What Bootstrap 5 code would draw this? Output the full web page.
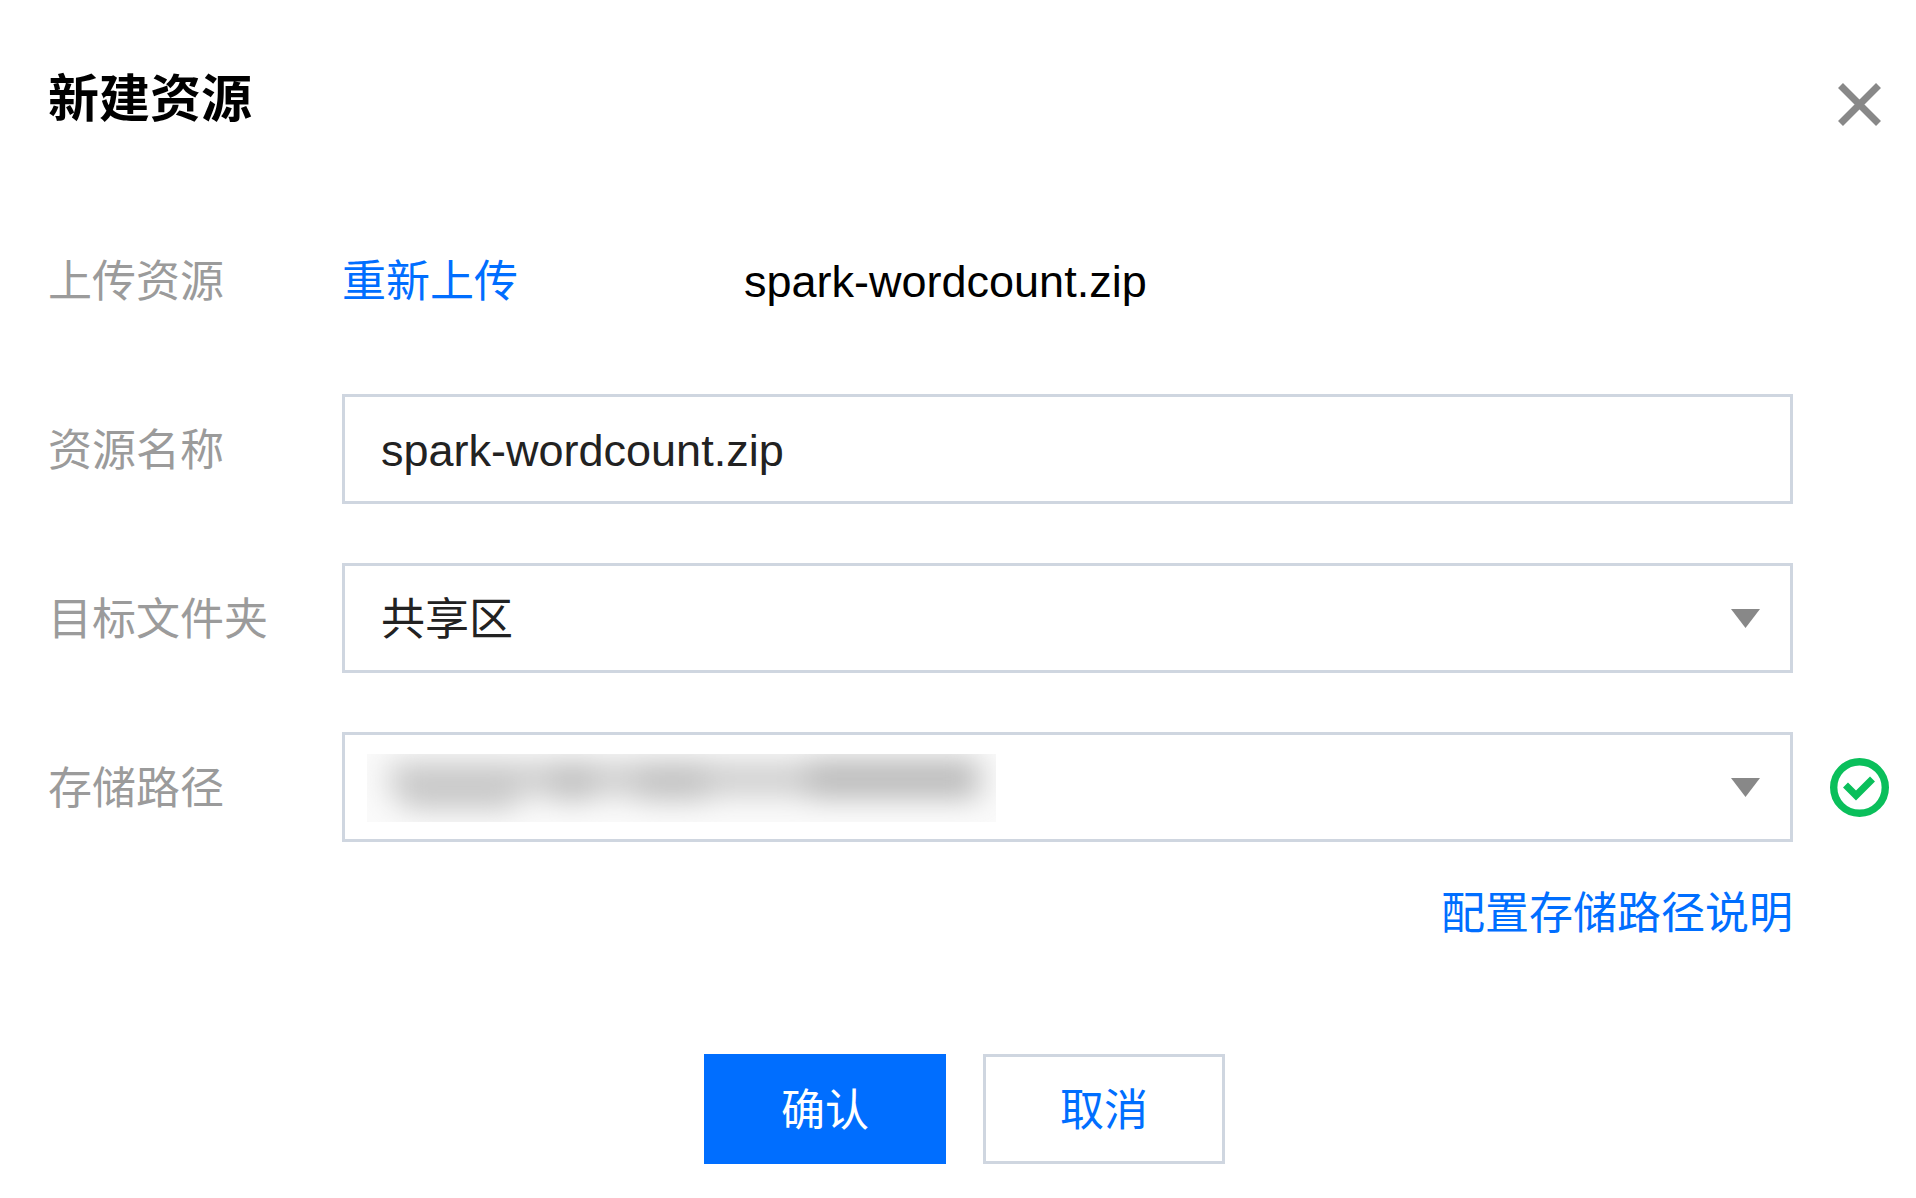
<!DOCTYPE html>
<html lang="zh-CN">
<head>
<meta charset="utf-8">
<meta name="viewport" content="width=device-width, initial-scale=1">
<title>新建资源</title>
<link href="https://cdn.jsdelivr.net/npm/bootstrap@5.3.0/dist/css/bootstrap.min.css" rel="stylesheet">
<style>
  body { font-family: "Liberation Sans", "Noto Sans CJK SC", sans-serif; font-size: 44px; line-height: 64px; color: #000; background: #fff; }
  .dialog-head { padding: 68px 35px 0 48px; height: 225px; }
  .dialog-title { font-size: 51px; line-height: 64px; font-weight: 700; }
  .close-btn { width: 43px; height: 43px; margin-top: 15px; }
  .close-btn svg, .status-icon svg { display: block; width: 100%; height: 100%; }
  .dialog-form { padding: 0 27px 0 48px; gap: 59px; }
  .field-row { min-height: 110px; }
  .field-label { width: 294px; color: #9b9b9b; }
  .field-label, .upload-link, .file-name { padding-top: 4px; }
  .blue-link { color: #006eff; text-decoration: none; }
  .upload-link { width: 402px; }
  .latin { font-size: 45px; }
  .field-box.form-control, .field-box.form-select {
    height: 110px; border: 3px solid #cfd6e0; border-radius: 0; padding: 4px 36px 0;
    color: #222; background-color: #fff; font-size: 44px; line-height: 64px;
  }
  .field-box.form-control.latin { font-size: 45px; }
  .field-box.form-select {
    background-image: url("data:image/svg+xml,%3Csvg xmlns='http://www.w3.org/2000/svg' viewBox='0 0 29 19'%3E%3Cpath d='M0 0H29L14.500 19Z' fill='%23888'/%3E%3C/svg%3E");
    background-size: 29px 19px; background-position: right 30px center;
  }
  .status-slot { width: 96px; }
  .status-icon { width: 59px; height: 59px; }
  .masked-value {
    left: 25px; top: 22px; width: 629px; height: 68px; overflow: hidden; pointer-events: none; background: #fafafa;
  }
  .masked-value svg { display: block; width: 100%; height: 100%; }
  .help-line { padding-right: 96px; margin-top: -19px; }
  .dialog-foot { padding: 108px 35px 32px 48px; gap: 37px; }
  .action-btn.btn { width: 242px; height: 110px; border-radius: 0; padding: 4px 0 0; font-size: 44px; line-height: 64px; border: 3px solid #cfd6e0; color: #006eff; background: #fff; }
  .action-btn.btn-primary { background: #006eff; border-color: #006eff; color: #fff; }
</style>
</head>
<body>
<main>
  <header class="dialog-head d-flex justify-content-between align-items-start">
    <h1 class="dialog-title m-0">新建资源</h1>
    <button type="button" class="close-btn btn p-0 border-0" aria-label="关闭">
      <svg viewBox="0 0 43 43"><path d="M2.500 2.500L40.500 40.500M40.500 2.500L2.500 40.500" stroke="#888" stroke-width="7" fill="none"/></svg>
    </button>
  </header>

  <form class="dialog-form d-flex flex-column">
    <div class="field-row d-flex align-items-center">
      <span class="field-label flex-shrink-0">上传资源</span>
      <a href="#" class="blue-link upload-link">重新上传</a>
      <span class="file-name latin">spark-wordcount.zip</span>
    </div>
    <div class="field-row d-flex align-items-center">
      <label class="field-label flex-shrink-0" for="resName">资源名称</label>
      <div class="flex-grow-1"><input id="resName" type="text" class="field-box latin form-control" value="spark-wordcount.zip"></div>
      <div class="status-slot flex-shrink-0"></div>
    </div>
    <div class="field-row d-flex align-items-center">
      <label class="field-label flex-shrink-0" for="folder">目标文件夹</label>
      <div class="flex-grow-1"><select id="folder" class="field-box form-select"><option>共享区</option></select></div>
      <div class="status-slot flex-shrink-0"></div>
    </div>
    <div class="field-row d-flex align-items-center">
      <label class="field-label flex-shrink-0" for="path">存储路径</label>
      <div class="flex-grow-1 position-relative">
        <select id="path" class="field-box form-select"><option></option></select>
        <!-- masked bucket path -->
        <div class="masked-value position-absolute">
          <svg viewBox="0 0 629 68" preserveAspectRatio="none" aria-hidden="true">
            <defs><filter id="soft" x="-20%" y="-100%" width="140%" height="300%"><feGaussianBlur stdDeviation="15 13"/></filter></defs>
            <g filter="url(#soft)">
              <rect x="22" y="6" width="590" height="38" fill="#d4d4d4"/>
              <rect x="35" y="14" width="115" height="42" fill="#cacaca"/>
              <rect x="185" y="6" width="40" height="42" fill="#c4c4c4"/>
              <rect x="270" y="6" width="70" height="42" fill="#c6c6c6"/>
              <rect x="440" y="4" width="172" height="42" fill="#c0c0c0"/>
            </g>
          </svg>
        </div>
      </div>
      <div class="status-slot flex-shrink-0 d-flex justify-content-end">
        <div class="status-icon">
          <svg viewBox="0 0 59 59" role="img" aria-label="可用"><circle cx="29.500" cy="29.500" r="25.800" fill="none" stroke="#0abf5b" stroke-width="7.400"/><path d="M15.500 27L26 37.500L42.500 21" fill="none" stroke="#0abf5b" stroke-width="7"/></svg>
        </div>
      </div>
    </div>
    <div class="help-line text-end"><a href="#" class="blue-link">配置存储路径说明</a></div>
  </form>

  <footer class="dialog-foot d-flex justify-content-center">
    <button type="submit" class="action-btn btn btn-primary">确认</button>
    <button type="button" class="action-btn btn">取消</button>
  </footer>
</main>
<script src="https://cdn.jsdelivr.net/npm/bootstrap@5.3.0/dist/js/bootstrap.bundle.min.js"></script>
</body>
</html>
